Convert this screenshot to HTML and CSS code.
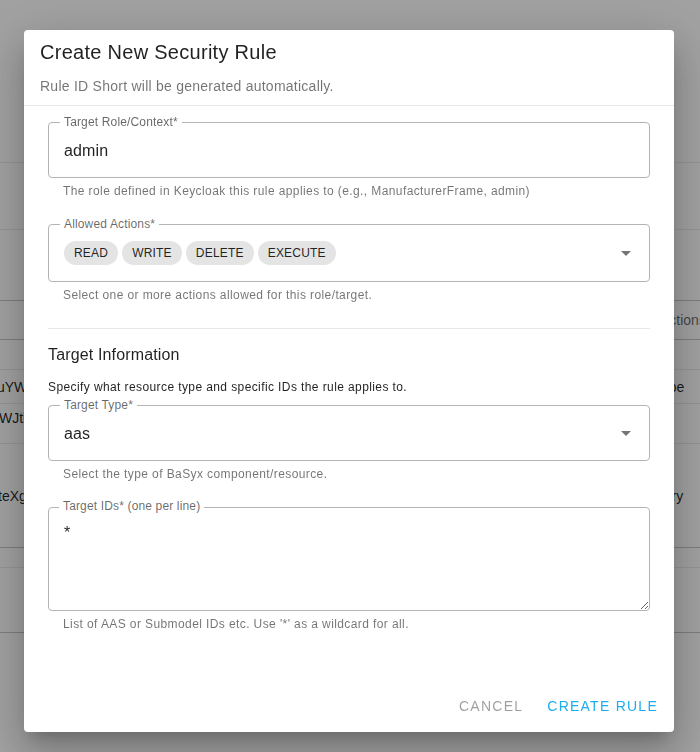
FILE: index.html
```html
<!DOCTYPE html>
<html lang="en">
<head>
<meta charset="utf-8">
<title>Create New Security Rule</title>
<link rel="stylesheet" href="styles.css">
</head>
<body>
<div class="page">
  <div class="row h1"></div>
  <div class="row h2"></div>
  <div class="row h3 dark"></div>
  <div class="row h4 dark"><span class="lcell"></span><span class="rcell rc-actions head">Actions</span></div>
  <div class="row h5"></div>
  <div class="row h6"><span class="lcell l1">uYWFzLzEy</span><span class="rcell rc-type">Type</span></div>
  <div class="row h7 top"><span class="lcell l2">WJtb2RlbA</span><span class="rcell"></span></div>
  <div class="row h8 dark"><span class="lcell l3">teXgMDE</span><span class="rcell rc-reg">Registry</span></div>
  <div class="row h9"></div>
  <div class="row h10 dark"></div>
  <div class="row h11"></div>
</div>

<div class="backdrop"></div>

<div class="dialog" role="dialog" aria-labelledby="dlg-title">
  <header class="dlg-head">
    <h2 class="dlg-title" id="dlg-title">Create New Security Rule</h2>
    <p class="dlg-sub">Rule ID Short will be generated automatically.</p>
  </header>

  <div class="dlg-content">
    <div class="field f-first">
      <div class="outline">
        <span class="flabel">Target Role/Context*</span>
        <span class="value">admin</span>
      </div>
      <p class="helper">The role defined in Keycloak this rule applies to (e.g., ManufacturerFrame, admin)</p>
    </div>

    <div class="field">
      <div class="outline outline-chips">
        <span class="flabel">Allowed Actions*</span>
        <div class="chips">
          <span class="chip">READ</span>
          <span class="chip">WRITE</span>
          <span class="chip">DELETE</span>
          <span class="chip">EXECUTE</span>
        </div>
        <svg class="arrow" viewBox="0 0 24 24" width="24" height="24" aria-hidden="true"><path d="M7 10l5 5 5-5z"/></svg>
      </div>
      <p class="helper">Select one or more actions allowed for this role/target.</p>
    </div>

    <hr class="divider">

    <h3 class="section-title">Target Information</h3>
    <p class="section-desc">Specify what resource type and specific IDs the rule applies to.</p>

    <div class="field f-tight">
      <div class="outline outline-select">
        <span class="flabel">Target Type*</span>
        <span class="value">aas</span>
        <svg class="arrow" viewBox="0 0 24 24" width="24" height="24" aria-hidden="true"><path d="M7 10l5 5 5-5z"/></svg>
      </div>
      <p class="helper">Select the type of BaSyx component/resource.</p>
    </div>

    <div class="field">
      <div class="ta-wrap">
        <textarea class="ta" rows="4">*</textarea>
        <span class="flabel">Target IDs* (one per line)</span>
      </div>
      <p class="helper">List of AAS or Submodel IDs etc. Use '*' as a wildcard for all.</p>
    </div>
  </div>

  <footer class="dlg-actions">
    <button class="btn btn-cancel" type="button">Cancel</button>
    <button class="btn btn-primary" type="button">Create Rule</button>
  </footer>
</div>
</body>
</html>
```

FILE: styles.css
```css
* { box-sizing: border-box; }

html, body {
  margin: 0;
  height: 100%;
}

body {
  font-family: "Liberation Sans", Arial, Helvetica, sans-serif;
  background: #ffffff;
  color: rgba(0, 0, 0, 0.87);
  overflow: hidden;
}

/* ---------- background page ---------- */
.page {
  display: flex;
  flex-direction: column;
  width: 700px;
}

.row {
  display: flex;
  align-items: center;
  justify-content: space-between;
  border-bottom: 1px solid #ebebeb;
  font-size: 14px;
  line-height: 20px;
  white-space: nowrap;
  overflow: hidden;
  flex: none;
}

.row.dark { border-bottom-color: #c6c6c6; }
.row.top { align-items: flex-start; padding-top: 4px; }

.h1 { height: 163px; }
.h2 { height: 67px; }
.h3 { height: 71px; }
.h4 { height: 39px; }
.h5 { height: 30px; }
.h6 { height: 34px; }
.h7 { height: 40px; }
.h8 { height: 104px; }
.h9 { height: 20px; }
.h10 { height: 65px; }
.h11 { height: 120px; border-bottom: none; }

.lcell {
  margin-left: -6px;
  color: rgba(0, 0, 0, 0.87);
}
.lcell.l1 { margin-left: -3px; }
.lcell.l2 { margin-left: -1px; }
.lcell.l3 { margin-left: -2px; }

.rcell {
  width: 80px;
  overflow: hidden;
  color: rgba(0, 0, 0, 0.87);
}
.rcell.head { color: rgba(0, 0, 0, 0.6); }
.rc-actions { padding-left: 40px; }
.rc-type { padding-left: 34px; }
.rc-reg { padding-left: 12px; }

/* ---------- backdrop ---------- */
.backdrop {
  position: fixed;
  inset: 0;
  background: rgba(0, 0, 0, 0.37);
}

/* ---------- dialog ---------- */
.dialog {
  position: fixed;
  left: 24px;
  top: 30px;
  width: 650px;
  height: 702px;
  background: #ffffff;
  border-radius: 4px;
  box-shadow:
    0 11px 15px -7px rgba(0, 0, 0, 0.2),
    0 24px 38px 3px rgba(0, 0, 0, 0.14),
    0 9px 46px 8px rgba(0, 0, 0, 0.12);
  display: flex;
  flex-direction: column;
  overflow: hidden;
}

.dlg-head {
  padding: 6px 16px 9px;
  border-bottom: 1px solid #e6e6e6;
}

.dlg-title {
  margin: 0;
  font-size: 20px;
  line-height: 32px;
  font-weight: 400;
  letter-spacing: 0.28px;
  color: rgba(0, 0, 0, 0.87);
}

.dlg-sub {
  margin: 8px 0 0;
  font-size: 14px;
  line-height: 20px;
  letter-spacing: 0.25px;
  color: rgba(0, 0, 0, 0.55);
}

.dlg-content {
  flex: 1;
  padding: 16px 24px 0;
  display: flex;
  flex-direction: column;
}

.field { margin-top: 23px; }
.field.f-first { margin-top: 0; }
.field.f-tight { margin-top: 9px; }

.outline {
  position: relative;
  height: 56px;
  border: 1px solid #b4b4b4;
  border-radius: 4px;
  display: flex;
  align-items: center;
  padding: 0 11px 0 15px;
}

.outline-chips { height: 58px; }

.flabel {
  position: absolute;
  top: -9px;
  left: 11px;
  padding: 0 4px;
  background: #ffffff;
  font-size: 12px;
  line-height: 16px;
  letter-spacing: 0.15px;
  color: rgba(0, 0, 0, 0.6);
  white-space: nowrap;
}

.value {
  flex: 1;
  font-size: 16px;
  line-height: 23px;
  letter-spacing: 0.15px;
  color: rgba(0, 0, 0, 0.87);
}

.chips {
  flex: 1;
  display: flex;
  gap: 4px;
}

.chip {
  height: 24px;
  padding: 0 10px;
  border-radius: 12px;
  background: #e4e4e4;
  font-size: 12px;
  line-height: 24px;
  letter-spacing: 0.2px;
  color: rgba(0, 0, 0, 0.87);
}

.arrow {
  flex: none;
  fill: rgba(0, 0, 0, 0.54);
}

.helper {
  margin: 3px 14px 0 15px;
  font-size: 12px;
  line-height: 20px;
  letter-spacing: 0.4px;
  color: rgba(0, 0, 0, 0.55);
}

.divider {
  margin: 23px 0 0;
  border: none;
  border-top: 1px solid #e8e8e8;
  height: 0;
}

.section-title {
  margin: 14px 0 0;
  font-size: 16px;
  line-height: 24px;
  font-weight: 400;
  letter-spacing: 0.15px;
  color: rgba(0, 0, 0, 0.87);
}

.section-desc {
  margin: 10px 0 0;
  font-size: 12px;
  line-height: 20px;
  letter-spacing: 0.4px;
  color: rgba(0, 0, 0, 0.87);
}

.section-desc + .field.f-tight { margin-top: 8px; }

.ta-wrap {
  position: relative;
}

.ta {
  display: block;
  width: 100%;
  height: 104px;
  margin: 0;
  border: 1px solid #b4b4b4;
  border-radius: 4px;
  padding: 13px 15px;
  font-family: "Liberation Sans", Arial, Helvetica, sans-serif;
  font-size: 16px;
  line-height: 23px;
  color: rgba(0, 0, 0, 0.87);
  background: #ffffff;
  resize: vertical;
  outline: none;
}

.dlg-actions {
  display: flex;
  justify-content: flex-end;
  align-items: center;
  gap: 8px;
  padding: 8px;
}

.btn {
  height: 36px;
  padding: 6px 8px;
  border: none;
  background: transparent;
  font-family: "Liberation Sans", Arial, Helvetica, sans-serif;
  font-size: 14px;
  line-height: 24px;
  letter-spacing: 1.25px;
  text-transform: uppercase;
  border-radius: 4px;
  cursor: pointer;
}

.btn-cancel { color: rgba(0, 0, 0, 0.38); }
.btn-primary { color: #1cadee; }
```
